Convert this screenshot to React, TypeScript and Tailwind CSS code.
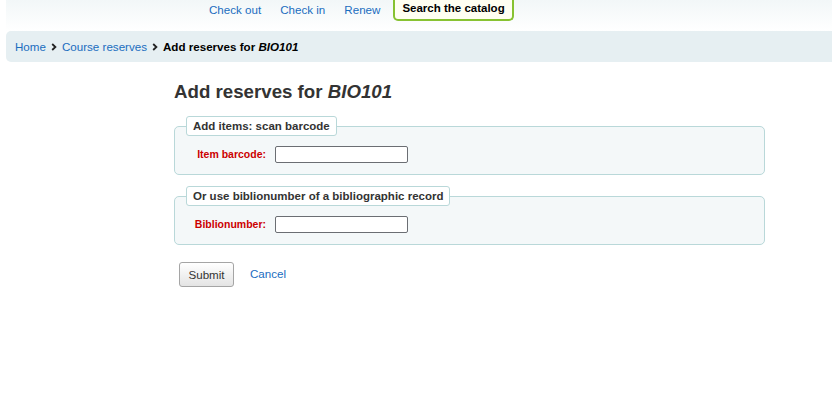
import React from "react";

const font = "font-['Liberation_Sans',Arial,sans-serif]";

function Chevron() {
  return (
    <svg className="mx-[5px] mt-[1px]" width="6" height="8" viewBox="0 0 6 8" fill="none">
      <path d="M1.2 1 L4.4 4 L1.2 7" stroke="#222" strokeWidth="1.8" />
    </svg>
  );
}

function Fieldset({ legend, label }: { legend: string; label: string }) {
  return (
    <fieldset className="m-0 rounded-[5px] border border-[#b9d8d9] bg-[#f4f8f9] pl-[11px] pr-[11px] pb-[11px] pt-0">
      <legend className="h-[20px] rounded-[3px] border border-[#b9d8d9] bg-white px-[6px] text-[11.5px] font-bold leading-[18px] text-[#333]">
        {legend}
      </legend>
      <div className="flex items-center pt-[10px]">
        <label className="w-[80px] text-right text-[10.5px] font-bold text-[#cc0000]">
          {label}
        </label>
        <input
          type="text"
          className="ml-[9px] h-[17px] w-[133px] rounded-[2px] border border-[#6b6e73] bg-white"
        />
      </div>
    </fieldset>
  );
}

export default function App() {
  return (
    <div className={`${font} min-h-[409px] w-full bg-white`}>
      {/* Top nav */}
      <div className="ml-[6px] flex h-[31px] items-start bg-gradient-to-b from-[#f2f7f8] to-white pl-[203px]">
        <a className="mt-[3px] text-[11.6px] leading-[14px] text-[#1a6dbf]">Check out</a>
        <a className="ml-[19px] mt-[3px] text-[11.6px] leading-[14px] text-[#1a6dbf]">Check in</a>
        <a className="ml-[19px] mt-[3px] text-[11.6px] leading-[14px] text-[#1a6dbf]">Renew</a>
        <div className="ml-[13px] h-[21px] rounded-b-[5px] border-2 border-t-0 border-[#87c231] bg-[#fffff2] px-[7px] pt-[1px] text-[11.5px] font-bold leading-[14px] text-black">
          Search the catalog
        </div>
      </div>

      {/* Breadcrumb */}
      <nav className="ml-[6px] flex h-[31px] items-center rounded-l-[5px] bg-[#e6eff2] pl-[9px] text-[11.6px]">
        <a className="text-[#1a6dbf]">Home</a>
        <Chevron />
        <a className="text-[#1a6dbf]">Course reserves</a>
        <Chevron />
        <span className="font-bold text-black">
          Add reserves for <i>BIO101</i>
        </span>
      </nav>

      <main className="ml-[174px] w-[591px]">
        <h1 className="mt-[19px] text-[18.7px] font-bold leading-[22px] text-[#333]">
          Add reserves for <i>BIO101</i>
        </h1>
        <div className="mt-[13px]">
          <Fieldset legend="Add items: scan barcode" label="Item barcode:" />
        </div>
        <div className="mt-[11px]">
          <Fieldset legend="Or use biblionumber of a bibliographic record" label="Biblionumber:" />
        </div>
        <div className="ml-[5px] mt-[17px] flex items-center">
          <button className="h-[25px] w-[55px] rounded-[3px] border border-[#a5a5a5] bg-gradient-to-b from-white to-[#e4e4e4] text-[11.6px] text-[#333]">
            Submit
          </button>
          <a className="ml-[16px] -mt-[2px] text-[11.6px] text-[#1a6dbf]">Cancel</a>
        </div>
      </main>
    </div>
  );
}
